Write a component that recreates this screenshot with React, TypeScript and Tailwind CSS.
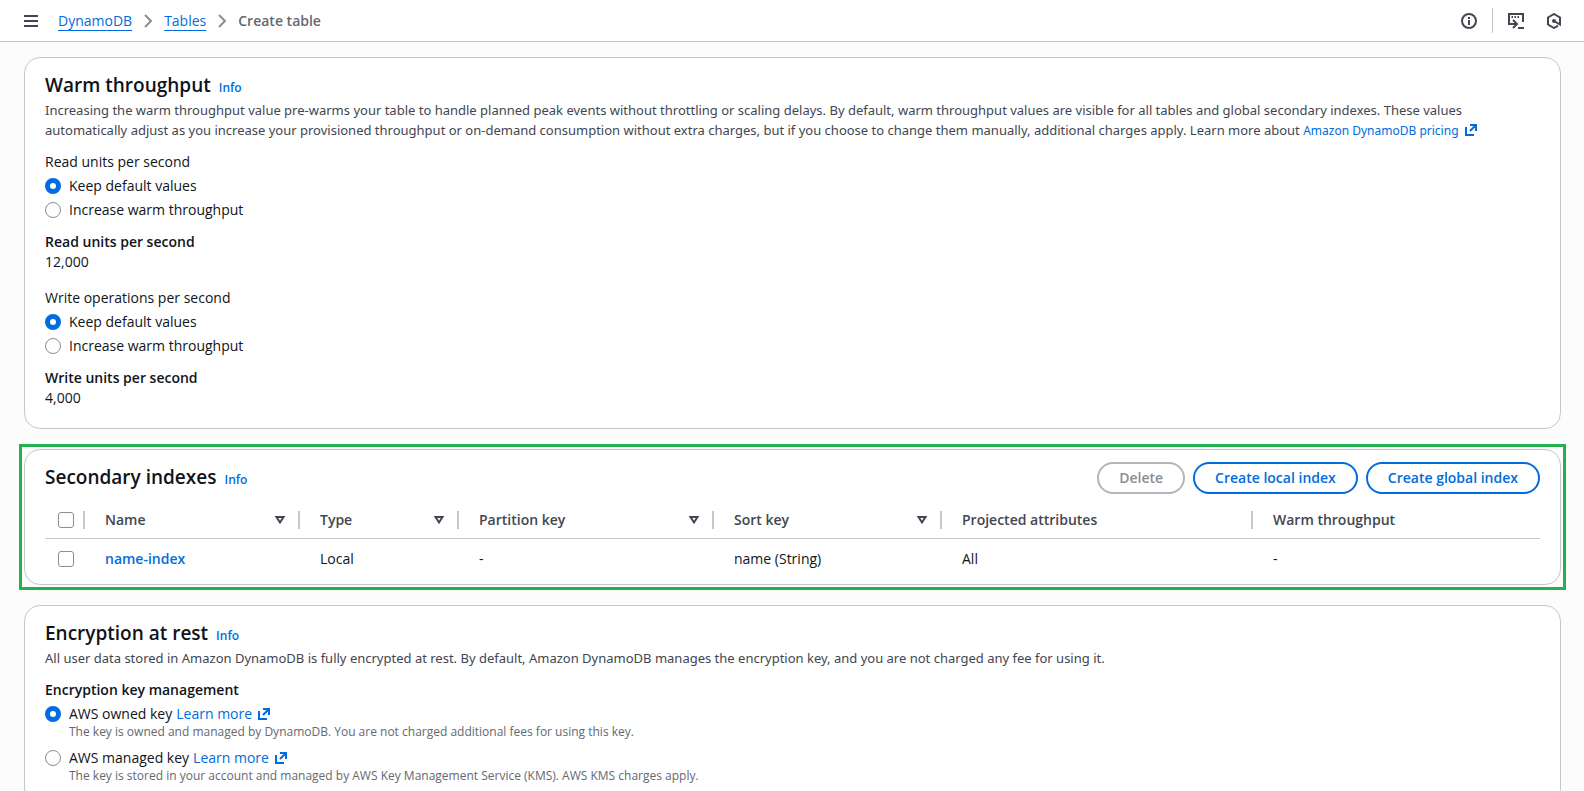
import type { ReactNode } from "react";

interface RadioOptionProps {
  name: string;
  label: string;
  checked?: boolean;
  link?: boolean;
  description?: string;
}

interface FieldProps {
  label: string;
  value: string;
}

interface SectionTitleProps {
  id: string;
  children: ReactNode;
}

const COLUMNS = [
  { label: "Name", width: "w-[215px]", sortable: true },
  { label: "Type", width: "w-[159px]", sortable: true },
  { label: "Partition key", width: "w-[255px]", sortable: true },
  { label: "Sort key", width: "w-[228px]", sortable: true },
  { label: "Projected attributes", width: "w-[311px]", sortable: false },
  { label: "Warm throughput", width: "", sortable: false },
];

const INDEXES = [
  {
    name: "name-index",
    values: ["Local", "-", "name (String)", "All", "-"],
  },
];

const CARD = "rounded-2xl border border-[#c6c6cd] bg-white px-5";
const CHECKBOX =
  "block h-4 w-4 appearance-none rounded-[3px] border border-[#8c8c94] bg-white checked:bg-[#006ce0]";
const BUTTON = "h-8 rounded-full border-2 px-5 text-sm font-semibold leading-5";
const CRUMB = "text-[#006ce0] underline decoration-1 underline-offset-4";
const DESCRIPTION =
  "mb-3 mt-[3px] font-['Noto_Sans',sans-serif] text-[13px] leading-5 text-[#424650]";

function ChevronIcon() {
  return (
    <svg aria-hidden className="h-4 w-4" fill="none" viewBox="0 0 16 16">
      <path d="m5 2 6 6-6 6" stroke="#8c8c94" strokeWidth="2" />
    </svg>
  );
}

function ExternalIcon() {
  return (
    <svg
      aria-hidden
      className="ml-1 inline-block h-4 w-4 align-[-3px]"
      fill="none"
      stroke="currentColor"
      strokeWidth="2"
      viewBox="0 0 16 16"
    >
      <path d="M3 5v8h8M7 3h6v6M13 3 7 9" />
    </svg>
  );
}

function SortIcon() {
  return (
    <svg
      aria-hidden
      className="h-4 w-4"
      fill="none"
      stroke="currentColor"
      strokeWidth="2"
      viewBox="0 0 16 16"
    >
      <path d="M4.500 5h7L8 10.500 4.500 5Z" />
    </svg>
  );
}

function Breadcrumbs() {
  return (
    <nav aria-label="Breadcrumbs" className="flex items-center gap-2">
      <a className={CRUMB} href="#dynamodb">
        DynamoDB
      </a>
      <ChevronIcon />
      <a className={CRUMB} href="#tables">
        Tables
      </a>
      <ChevronIcon />
      <span className="font-semibold text-[#656871]">Create table</span>
    </nav>
  );
}

function TopBar() {
  return (
    <header className="flex h-[42px] items-center justify-between border-b border-[#c6c6cd] bg-white pl-[23px] pr-[22px] text-[#424650]">
      <div className="flex items-center gap-[19px]">
        <button aria-label="Open navigation" type="button">
          <svg aria-hidden className="h-4 w-4" viewBox="0 0 16 16">
            <path d="M1 3h14M1 8h14M1 13h14" stroke="currentColor" strokeWidth="2" />
          </svg>
        </button>
        <Breadcrumbs />
      </div>
      <div className="flex items-center">
        <button aria-label="Info panel" type="button">
          <svg aria-hidden className="h-4 w-4" fill="none" stroke="currentColor" strokeWidth="2" viewBox="0 0 16 16">
            <circle cx="8" cy="8" r="7" />
            <path d="M8 7v5M8 4v2" />
          </svg>
        </button>
        <div className="mx-[15px] h-[25px] w-px bg-[#c6c6cd]" />
        <button aria-label="CloudShell" type="button">
          <svg aria-hidden className="h-4 w-4" fill="none" stroke="currentColor" strokeWidth="2" viewBox="0 0 16 16">
            <path d="M3 11H1V1h14v8M10 15h6M3 11h5M5 7l4 4-4 4" />
            <path d="M3.500 4h1.500M6.500 4h1.500M9.500 4h1.500" />
          </svg>
        </button>
        <button aria-label="Amazon Q" className="ml-[22px]" type="button">
          <svg aria-hidden className="h-4 w-4" fill="none" stroke="currentColor" strokeWidth="2" viewBox="0 0 16 16">
            <path d="M12 12.700 8 15l-6-3.500v-7L8 1l6 3.500v7L8 8" />
            <circle cx="8" cy="8" fill="currentColor" r="1" />
          </svg>
        </button>
      </div>
    </header>
  );
}

function SectionTitle({ id, children }: SectionTitleProps) {
  return (
    <div className="flex items-baseline gap-2">
      <h2 className="text-[19px] font-semibold leading-6">{children}</h2>
      <a className="text-xs font-semibold text-[#006ce0]" href={id}>
        Info
      </a>
    </div>
  );
}

function RadioOption({ name, label, checked, link, description }: RadioOptionProps) {
  return (
    <div className="grid grid-cols-[16px_1fr] items-center gap-x-2">
      <input
        className="h-4 w-4 appearance-none rounded-full border border-[#8c8c94] bg-white checked:border-5 checked:border-[#006ce0]"
        defaultChecked={checked}
        id={`${name}-${label}`}
        name={name}
        type="radio"
      />
      <div>
        <label htmlFor={`${name}-${label}`}>{label}</label>
        {link && (
          <a className="ml-1 text-[#006ce0]" href="#learn-more">
            Learn more
            <ExternalIcon />
          </a>
        )}
      </div>
      {description && (
        <p className="col-start-2 text-xs text-[#656871]">{description}</p>
      )}
    </div>
  );
}

function Field({ label, value }: FieldProps) {
  return (
    <dl className="mt-3">
      <dt className="font-semibold">{label}</dt>
      <dd>{value}</dd>
    </dl>
  );
}

function ThroughputGroup({ name, legend }: { name: string; legend: string }) {
  return (
    <fieldset>
      <legend>{legend}</legend>
      <div className="mt-1 flex flex-col gap-1">
        <RadioOption checked label="Keep default values" name={name} />
        <RadioOption label="Increase warm throughput" name={name} />
      </div>
    </fieldset>
  );
}

function WarmThroughput() {
  return (
    <section className={`${CARD} pb-5 pt-[15px]`}>
      <SectionTitle id="#warm-info">Warm throughput</SectionTitle>
      <p className={DESCRIPTION}>
        Increasing the warm throughput value pre-warms your table to handle
        planned peak events without throttling or scaling delays. By default,
        warm throughput values are visible for all tables and global secondary
        indexes. These values automatically adjust as you increase your
        provisioned throughput or on-demand consumption without extra charges,
        but if you choose to change them manually, additional charges apply.
        Learn more about{" "}
        <a className="text-xs text-[#006ce0]" href="#pricing">
          Amazon DynamoDB pricing
          <ExternalIcon />
        </a>
      </p>
      <ThroughputGroup legend="Read units per second" name="read" />
      <Field label="Read units per second" value="12,000" />
      <div className="mt-4">
        <ThroughputGroup legend="Write operations per second" name="write" />
      </div>
      <Field label="Write units per second" value="4,000" />
    </section>
  );
}

function IndexTable() {
  return (
    <table className="mt-2 w-full table-fixed text-left">
      <thead className="text-[#424650]">
        <tr className="h-9 border-b border-[#c6c6cd]">
          <th className="w-10">
            <div className="flex items-center justify-between pl-[13px]">
              <input aria-label="Select all indexes" className={CHECKBOX} type="checkbox" />
              <span className="h-[18px] w-[2px] bg-[#c6c6cd]" />
            </div>
          </th>
          {COLUMNS.map((column, i) => (
            <th className={column.width} key={column.label}>
              <div className="flex items-center pl-5">
                <span className="flex-1 font-semibold">{column.label}</span>
                {column.sortable && <SortIcon />}
                {i < COLUMNS.length - 1 && (
                  <span className="ml-[10px] h-[18px] w-[2px] bg-[#c6c6cd]" />
                )}
              </div>
            </th>
          ))}
        </tr>
      </thead>
      <tbody>
        {INDEXES.map((index) => (
          <tr className="h-[41px]" key={index.name}>
            <td className="pl-[13px]">
              <input aria-label={`Select ${index.name}`} className={CHECKBOX} type="checkbox" />
            </td>
            <td className="pl-5">
              <a className="font-semibold text-[#006ce0]" href="#name-index">
                {index.name}
              </a>
            </td>
            {index.values.map((value, i) => (
              <td className="pl-5" key={i}>
                {value}
              </td>
            ))}
          </tr>
        ))}
      </tbody>
    </table>
  );
}

function SecondaryIndexes() {
  return (
    <section className={`${CARD} relative pb-[5px] pt-3`}>
      <div className="flex items-start justify-between">
        <div className="pt-[3px]">
          <SectionTitle id="#indexes-info">Secondary indexes</SectionTitle>
        </div>
        <div className="flex gap-2">
          <button className={`${BUTTON} border-[#b4b4bb] text-[#8c8c94]`} disabled type="button">
            Delete
          </button>
          <button className={`${BUTTON} border-[#006ce0] text-[#006ce0]`} type="button">
            Create local index
          </button>
          <button className={`${BUTTON} border-[#006ce0] text-[#006ce0]`} type="button">
            Create global index
          </button>
        </div>
      </div>
      <IndexTable />
      {/* highlight frame around the card */}
      <div className="pointer-events-none absolute -inset-[6px] border-3 border-[#22b14c]" />
    </section>
  );
}

function EncryptionAtRest() {
  return (
    <section className={`${CARD} pb-5 pt-[15px]`}>
      <SectionTitle id="#encryption-info">Encryption at rest</SectionTitle>
      <p className={DESCRIPTION}>
        All user data stored in Amazon DynamoDB is fully encrypted at rest. By
        default, Amazon DynamoDB manages the encryption key, and you are not
        charged any fee for using it.
      </p>
      <fieldset>
        <legend className="font-semibold">Encryption key management</legend>
        <div className="mt-1 flex flex-col gap-2">
          <RadioOption
            checked
            description="The key is owned and managed by DynamoDB. You are not charged additional fees for using this key."
            label="AWS owned key"
            link
            name="encryption"
          />
          <RadioOption
            description="The key is stored in your account and managed by AWS Key Management Service (KMS). AWS KMS charges apply."
            label="AWS managed key"
            link
            name="encryption"
          />
        </div>
      </fieldset>
    </section>
  );
}

export default function App() {
  return (
    <div className="min-h-screen bg-[#fcfcfd] font-['Open_Sans',sans-serif] text-sm leading-5 text-[#0f141a]">
      <TopBar />
      <main className="flex flex-col gap-5 pl-6 pr-[23px] pt-[15px]">
        <WarmThroughput />
        <SecondaryIndexes />
        <EncryptionAtRest />
      </main>
    </div>
  );
}
